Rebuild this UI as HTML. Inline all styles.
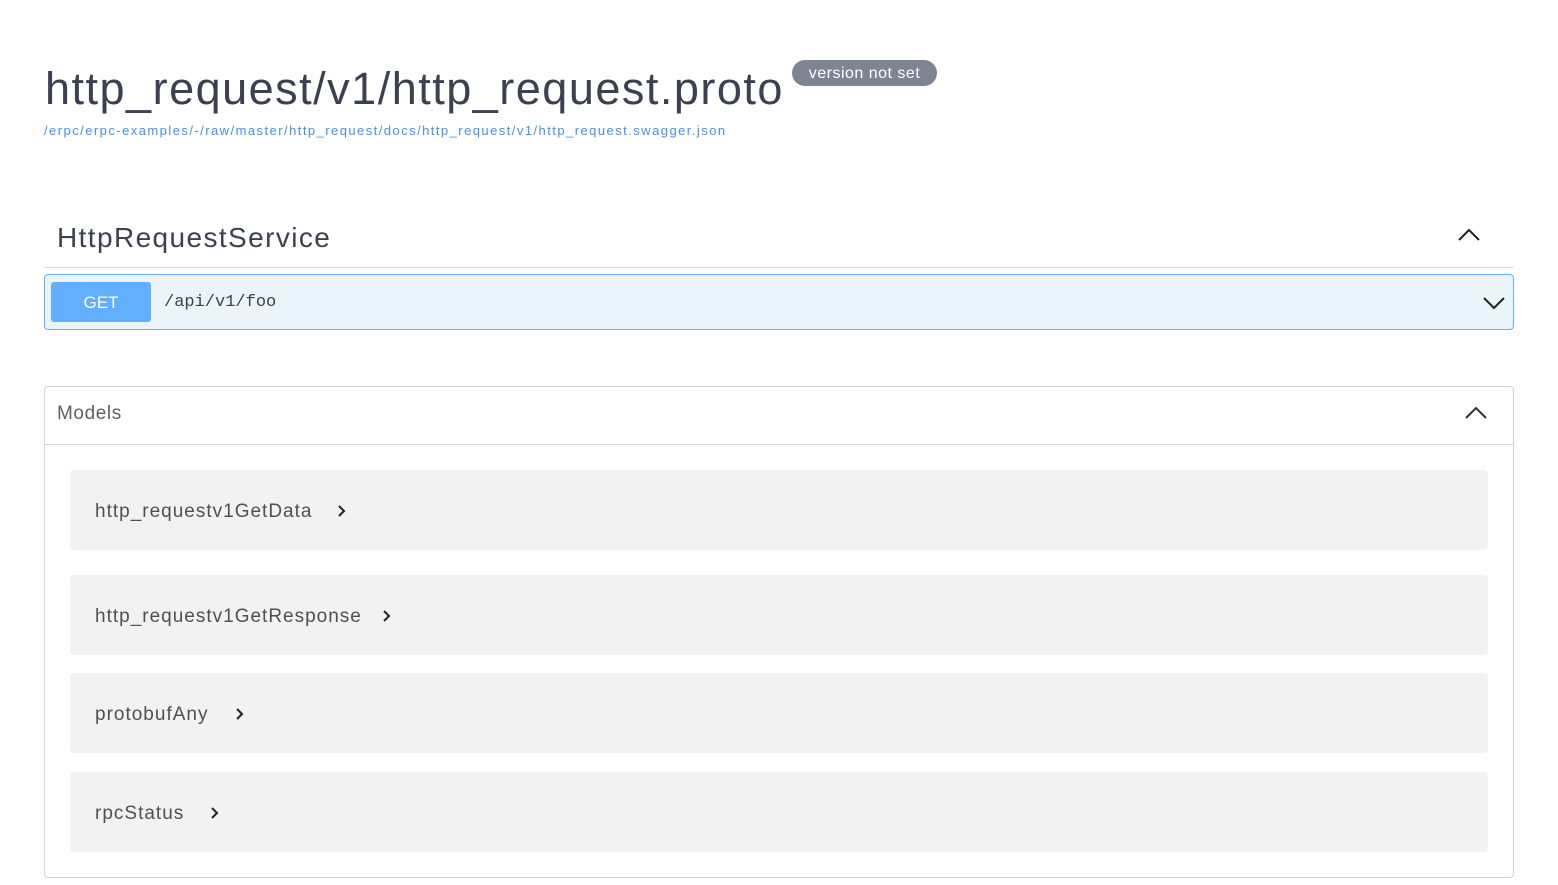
<!DOCTYPE html>
<html><head><meta charset="utf-8"><style>
*{box-sizing:border-box;margin:0;padding:0}
body{width:1558px;height:885px;background:#fff;font-family:"Liberation Sans",sans-serif;color:#3b4151;position:relative;overflow:hidden}
.abs{position:absolute}
.title{left:45px;top:63px;font-size:45px;white-space:nowrap;letter-spacing:1.5px}
.badge{left:792px;top:60px;width:145px;height:26px;background:#7d8492;border-radius:13px;color:#fff;font-size:16px;text-align:center;line-height:27px;letter-spacing:0.5px}
.link{left:44px;top:123px;font-size:13px;color:#4990e2;letter-spacing:1.45px;white-space:nowrap}
.svc{left:57px;top:222px;font-size:28px;letter-spacing:1.4px}
.line{left:44px;top:267px;width:1470px;height:1px;background:#d8dae0}
.op{left:44px;top:274px;width:1470px;height:56px;background:#ebf3fb;border:1px solid #61affe;border-radius:4px}
.get{left:51px;top:282px;width:100px;height:40px;background:#61affe;border-radius:3px;color:#fff;font-size:17px;text-align:center;line-height:41px}
.path{left:164px;top:293px;font-family:"Liberation Mono",monospace;font-size:17px}
.models{left:44px;top:386px;width:1470px;height:492px;border:1px solid #d3d3d3;border-radius:4px}
.mh{left:44px;top:444px;width:1470px;height:1px;background:#d3d3d3}
.mt{left:57px;top:403px;font-size:19px;color:#606060;letter-spacing:0.6px}
.row{left:70px;width:1418px;height:80px;background:#f2f2f2;border-radius:4px}
.row span{position:absolute;left:25px;top:31px;font-size:19px;color:#505050;white-space:nowrap;letter-spacing:1px}
.row svg{position:absolute;top:34px}
</style></head><body>
<div class="abs title">http_request/v1/http_request.proto</div>
<div class="abs badge">version not set</div>
<div class="abs link">/erpc/erpc-examples/-/raw/master/http_request/docs/http_request/v1/http_request.swagger.json</div>
<div class="abs svc">HttpRequestService</div>
<svg class="abs" style="left:1457px;top:228px" width="24" height="14"><path d="M2 12 L12 2 L22 12" fill="none" stroke="#222" stroke-width="2"/></svg>
<div class="abs line"></div>
<div class="abs op"></div>
<div class="abs get">GET</div>
<div class="abs path">/api/v1/foo</div>
<svg class="abs" style="left:1482px;top:296px" width="24" height="14"><path d="M2 2 L12 12 L22 2" fill="none" stroke="#222" stroke-width="2"/></svg>
<div class="abs models"></div>
<div class="abs mh"></div>
<div class="abs mt">Models</div>
<svg class="abs" style="left:1464px;top:406px" width="24" height="14"><path d="M2 12 L12 2 L22 12" fill="none" stroke="#333" stroke-width="2"/></svg>
<div class="abs row" style="top:470px"><span>http_requestv1GetData</span><svg style="left:267px" width="10" height="14"><path d="M2 2 L7 7 L2 12" fill="none" stroke="#222" stroke-width="2"/></svg></div>
<div class="abs row" style="top:575px"><span>http_requestv1GetResponse</span><svg style="left:312px" width="10" height="14"><path d="M2 2 L7 7 L2 12" fill="none" stroke="#222" stroke-width="2"/></svg></div>
<div class="abs row" style="top:673px"><span>protobufAny</span><svg style="left:165px" width="10" height="14"><path d="M2 2 L7 7 L2 12" fill="none" stroke="#222" stroke-width="2"/></svg></div>
<div class="abs row" style="top:772px"><span>rpcStatus</span><svg style="left:140px" width="10" height="14"><path d="M2 2 L7 7 L2 12" fill="none" stroke="#222" stroke-width="2"/></svg></div>
</body></html>
